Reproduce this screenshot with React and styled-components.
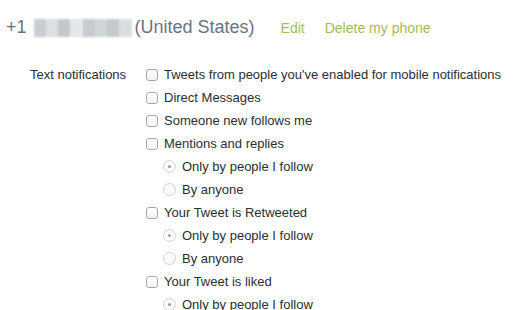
import React from "react"
import styled, { createGlobalStyle } from "styled-components"

const GlobalStyle = createGlobalStyle`
  body {
    margin: 0;
    background: #fff;
    font-family: "Liberation Sans", Arial, sans-serif;
  }
`

const Page = styled.div`
  width: 522px;
  height: 310px;
  overflow: hidden;
  padding: 17px 0 0 6px;
  box-sizing: border-box;
`

const PhoneRow = styled.div`
  display: flex;
  align-items: baseline;
  height: 22px;
  color: #66757f;
  font-size: 18px;
`

const Masked = styled.span`
  display: inline-grid;
  grid-template-columns: repeat(8, 1fr);
  width: 98px;
  height: 18px;
  margin: 0 3px 0 7px;
  align-self: center;
  filter: blur(1px);

  span {
    background: ${(p) => p.$c || "#d0d3d6"};
  }
`

const Link = styled.a`
  color: #9fbb58;
  font-size: 14px;
  margin-left: ${(p) => p.$gap}px;
  text-decoration: none;
  cursor: pointer;
`

const Section = styled.div`
  display: grid;
  grid-template-columns: 116px 1fr;
  margin-top: 24px;
  padding-left: 24px;
  font-size: 13px;
  color: #292f33;
`

const Label = styled.div`
  line-height: 23px;
`

const List = styled.div`
  display: flex;
  flex-direction: column;
`

const Row = styled.label`
  display: flex;
  align-items: center;
  height: 23px;
  padding-left: ${(p) => (p.$sub ? 17 : 0)}px;
  white-space: nowrap;
`

const Box = styled.span`
  width: 10px;
  height: 10px;
  border: 1px solid #a9a9a9;
  border-radius: 3px;
  background: linear-gradient(#ffffff, #f4f4f4);
  margin-right: 6px;
  flex: none;
`

const Radio = styled.span`
  width: 11px;
  height: 11px;
  border: 1px solid #d2d2d2;
  border-radius: 50%;
  background: #fbfbfb;
  margin-right: 6px;
  display: flex;
  align-items: center;
  justify-content: center;
  flex: none;

  &::after {
    content: "";
    width: 3px;
    height: 3px;
    border-radius: 50%;
    background: ${(p) => (p.$on ? "#9a9a9a" : "transparent")};
  }
`

const blocks = ["#c9ccd0", "#dde0e3", "#c3c7cb", "#e4e6e8", "#c7cace", "#d2d5d8", "#c5c9cd", "#dadde0"]

const Check = ({ children }) => (
  <Row>
    <Box />
    {children}
  </Row>
)

const Option = ({ on, children }) => (
  <Row $sub>
    <Radio $on={on} />
    {children}
  </Row>
)

export default function App() {
  return (
    <Page>
      <GlobalStyle />
      <PhoneRow>
        +1
        <Masked>
          {blocks.map((c, i) => (
            <span key={i} style={{ background: c }} />
          ))}
        </Masked>
        (United States)
        <Link $gap={26}>Edit</Link>
        <Link $gap={20}>Delete my phone</Link>
      </PhoneRow>
      <Section>
        <Label>Text notifications</Label>
        <List>
          <Check>Tweets from people you've enabled for mobile notifications</Check>
          <Check>Direct Messages</Check>
          <Check>Someone new follows me</Check>
          <Check>Mentions and replies</Check>
          <Option on>Only by people I follow</Option>
          <Option>By anyone</Option>
          <Check>Your Tweet is Retweeted</Check>
          <Option on>Only by people I follow</Option>
          <Option>By anyone</Option>
          <Check>Your Tweet is liked</Check>
          <Option on>Only by people I follow</Option>
        </List>
      </Section>
    </Page>
  )
}
